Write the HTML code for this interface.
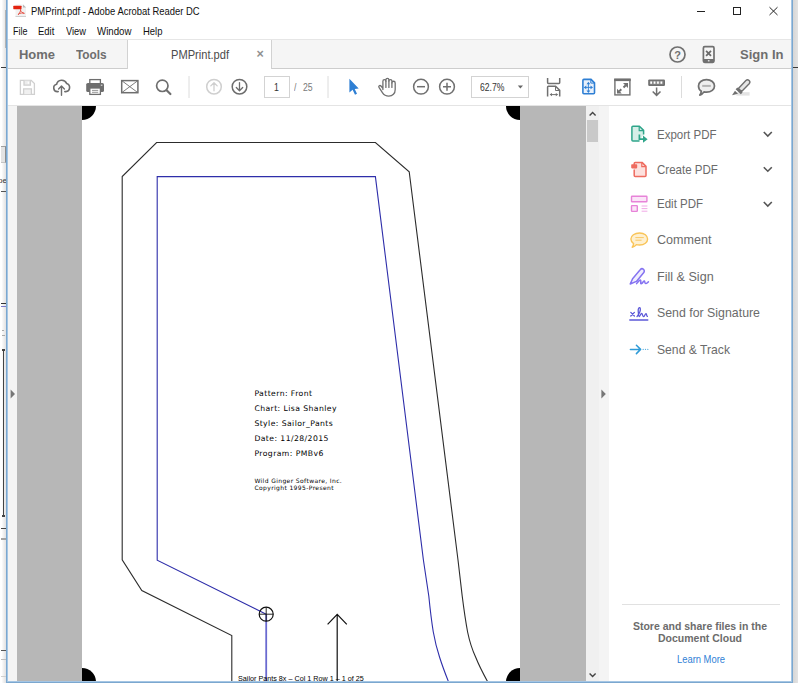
<!DOCTYPE html>
<html>
<head>
<meta charset="utf-8">
<title>PMPrint.pdf - Adobe Acrobat Reader DC</title>
<style>
html,body{margin:0;padding:0;}
body{width:800px;height:683px;overflow:hidden;background:#fff;position:relative;font-family:"Liberation Sans",sans-serif;}
.abs{position:absolute;}
.t{position:absolute;white-space:nowrap;transform-origin:0 0;}
svg{position:absolute;left:0;top:0;overflow:visible;}
</style>
</head>
<body>
<!-- desktop bits outside the window -->
<div class="abs" style="left:0;top:0;width:6px;height:683px;background:linear-gradient(90deg,#fff 0,#fff 25%,#ececec 70%,#e4e2e2 100%)"></div>
<div class="abs" style="left:1px;top:67px;width:6px;height:1px;background:#3a3a3a"></div>
<div class="abs" style="left:5px;top:10px;width:1px;height:38px;background:#b4b4b4"></div>
<div class="abs" style="left:1px;top:146px;width:5px;height:17px;background:#e3e3e3;border-top:1px solid #a0a0a0;border-right:1px solid #8c8c8c;border-bottom:1px solid #c4c4c4;box-sizing:border-box"></div>
<div class="t" style="left:-2px;top:175px;font-size:8px;line-height:11px;color:#333">pe</div>
<div class="abs" style="left:1px;top:191px;width:5px;height:1px;background:#555"></div>
<div class="abs" style="left:1px;top:303px;width:5px;height:1px;background:#333"></div>
<div class="abs" style="left:1px;top:306px;width:5px;height:1px;background:#7a78c8"></div>
<div class="abs" style="left:2px;top:330px;width:2px;height:1px;background:#aaa"></div>
<div class="abs" style="left:2px;top:335px;width:3px;height:1px;background:#aaa"></div>
<div class="abs" style="left:3px;top:350px;width:1px;height:167px;background:#444"></div>
<div class="abs" style="left:2px;top:349px;width:3px;height:2px;background:#444"></div>
<div class="abs" style="left:2px;top:515px;width:3px;height:2px;background:#444"></div>
<div class="abs" style="left:1px;top:528px;width:5px;height:1px;background:#444"></div>
<div class="abs" style="left:1px;top:538px;width:5px;height:2px;background:#a2a2a2"></div>
<div class="abs" style="left:1px;top:650px;width:5px;height:1px;background:#555"></div>
<div class="abs" style="left:1px;top:659px;width:5px;height:1px;background:#bdbdbd"></div>
<div class="abs" style="left:1px;top:676px;width:5px;height:1px;background:#d0d0d0"></div>
<div class="abs" style="left:793px;top:0;width:7px;height:683px;background:linear-gradient(90deg,#d6d6d6 0,#e2e2e2 65%,#fff 72%,#fff 100%)"></div>
<div class="abs" style="left:793px;top:67px;width:5px;height:1px;background:#3a3a3a"></div>

<!-- window frame -->
<div class="abs" style="left:6px;top:0;width:1px;height:683px;background:#7ba7cf"></div>
<div class="abs" style="left:7px;top:0;width:1px;height:683px;background:#a5c6e4"></div>
<div class="abs" style="left:791px;top:0;width:1px;height:683px;background:#a5c6e4"></div>
<div class="abs" style="left:792px;top:0;width:1px;height:683px;background:#7ba7cf"></div>
<div class="abs" style="left:8px;top:681px;width:783px;height:1px;background:#a5c6e4"></div>
<div class="abs" style="left:6px;top:682px;width:787px;height:1px;background:#7ba7cf"></div>

<!-- title bar -->
<div class="t" style="left:30.5px;top:4px;font-size:11.5px;line-height:15px;color:#111;transform:scaleX(0.819)">PMPrint.pdf - Adobe Acrobat Reader DC</div>
<!-- menu bar -->
<div class="t" style="left:13px;top:24px;font-size:11.5px;line-height:15px;color:#111;transform:scaleX(0.78)">File</div>
<div class="t" style="left:38.2px;top:24px;font-size:11.5px;line-height:15px;color:#111;transform:scaleX(0.82)">Edit</div>
<div class="t" style="left:65.5px;top:24px;font-size:11.5px;line-height:15px;color:#111;transform:scaleX(0.81)">View</div>
<div class="t" style="left:96.7px;top:24px;font-size:11.5px;line-height:15px;color:#111;transform:scaleX(0.843)">Window</div>
<div class="t" style="left:142.5px;top:24px;font-size:11.5px;line-height:15px;color:#111;transform:scaleX(0.824)">Help</div>

<!-- tab bar -->
<div class="abs" style="left:8px;top:39px;width:783px;height:1px;background:#e6e6e6"></div>
<div class="abs" style="left:8px;top:40px;width:783px;height:28px;background:#f5f5f5"></div>
<div class="abs" style="left:8px;top:68px;width:783px;height:1px;background:#cdcdcd"></div>
<div class="abs" style="left:127px;top:40px;width:145px;height:29px;background:#fff;border-left:1px solid #d2d2d2;border-right:1px solid #d2d2d2;box-sizing:border-box"></div>
<div class="t" style="left:19px;top:46px;font-size:12px;font-weight:bold;line-height:18px;color:#6e6e6e;transform:scaleX(1.08)">Home</div>
<div class="t" style="left:76px;top:46px;font-size:12px;font-weight:bold;line-height:18px;color:#6e6e6e;transform:scaleX(0.987)">Tools</div>
<div class="t" style="left:170.7px;top:47px;font-size:12px;line-height:16px;color:#4b4b4b;transform:scaleX(0.925)">PMPrint.pdf</div>
<div class="t" style="left:256.6px;top:46px;font-size:12.5px;font-weight:bold;line-height:16px;color:#909090">×</div>
<div class="t" style="left:739.7px;top:46px;font-size:12px;font-weight:bold;line-height:18px;color:#6e6e6e;transform:scaleX(1.087)">Sign In</div>

<!-- toolbar -->
<div class="abs" style="left:8px;top:105px;width:783px;height:1px;background:#e4e4e4"></div>
<div class="abs" style="left:264px;top:76px;width:26px;height:22px;border:1px solid #d3d3d3;box-sizing:border-box;background:#fff"></div>
<div class="t" style="left:273.6px;top:80.7px;font-size:10px;line-height:14px;color:#333;transform:scaleX(0.87)">1</div>
<div class="t" style="left:294px;top:80.7px;font-size:10px;line-height:14px;color:#7a7a7a;word-spacing:4.8px;transform:scaleX(0.87)">/ 25</div>
<div class="abs" style="left:471px;top:76px;width:58px;height:22px;border:1px solid #d3d3d3;box-sizing:border-box;background:#fff"></div>
<div class="t" style="left:479.5px;top:80.7px;font-size:10px;line-height:14px;color:#333;transform:scaleX(0.86)">62.7%</div>

<!-- document area -->
<div class="abs" style="left:8px;top:106px;width:9px;height:575px;background:#f4f4f4"></div>
<div class="abs" style="left:17px;top:106px;width:569px;height:575px;background:#b7b7b7"></div>
<div class="abs" id="page" style="left:82px;top:106px;width:438px;height:575px;background:#fff;overflow:hidden"></div>

<!-- page content -->
<svg width="800" height="683" viewBox="0 0 800 683" style="clip-path:inset(106px 280px 2px 82px)">
  <g fill="#000">
    <circle cx="82" cy="106" r="14"/><circle cx="520" cy="106" r="14"/>
    <circle cx="82" cy="682" r="14"/><circle cx="520" cy="682" r="14"/>
  </g>
  <path d="M231.8 682 V635.6 L141.8 590.6 L122.2 559.9 V176.6 L156.6 142.5 H375.4 L409.2 171.8 L458 560 L462.2 596 Q465 618 467.6 632 Q470.5 646 475.7 657.3 Q480 668 487.8 682" fill="none" stroke="#2c2c2c" stroke-width="1.1"/>
  <path d="M266.2 614.2 L157.2 560.2 V176.6 H375.4 L423.4 560 L428.8 596 Q431 618 433.3 632 Q435.8 646 439.6 657.3 Q443 668 448.6 682" fill="none" stroke="#2e2eaa" stroke-width="1.1"/>
  <path d="M266.2 614.2 V682" fill="none" stroke="#6a6ad0" stroke-width="1.8"/>
  <circle cx="266.2" cy="614.2" r="7" fill="none" stroke="#111" stroke-width="1.2"/>
  <path d="M259.2 614.2 H273.2 M266.2 607.2 V621.2" stroke="#111" stroke-width="0.9" fill="none"/>
  <path d="M337.2 682 V614.4 M327.6 624.4 L337.2 614.4 L346.8 624.4" fill="none" stroke="#111" stroke-width="1.2"/>
  <g font-family="'DejaVu Sans',sans-serif" font-size="7.7" fill="#000" letter-spacing="0.42">
    <text x="254.4" y="395.8">Pattern: Front</text>
    <text x="254.4" y="410.7">Chart: Lisa Shanley</text>
    <text x="254.4" y="425.7">Style: Sailor_Pants</text>
    <text x="254.4" y="440.6">Date: 11/28/2015</text>
    <text x="254.4" y="455.6">Program: PMBv6</text>
  </g>
  <g font-family="'DejaVu Sans',sans-serif" font-size="6" fill="#000" letter-spacing="0.38">
    <text x="254.4" y="482.8">Wild Ginger Software, Inc.</text>
    <text x="254.4" y="489.8">Copyright 1995-Present</text>
  </g>
  <text x="238" y="681.3" font-family="'Liberation Sans',sans-serif" font-size="6.4" fill="#000" textLength="125.7" lengthAdjust="spacingAndGlyphs">Sailor Pants 8x – Col 1 Row 1 – 1 of 25</text>
</svg>
<div class="abs" style="left:586px;top:106px;width:13px;height:575px;background:#f0f0f0"></div>
<div class="abs" style="left:587px;top:120px;width:11px;height:22px;background:#c9c9c9"></div>
<div class="abs" style="left:599px;top:106px;width:10px;height:575px;background:#f4f4f4"></div>

<!-- right panel -->
<div class="t" style="left:657px;top:126.5px;font-size:12.8px;line-height:16px;color:#6b6b6b;transform:scaleX(0.9)">Export PDF</div>
<div class="t" style="left:657px;top:161.5px;font-size:12.8px;line-height:16px;color:#6b6b6b;transform:scaleX(0.9)">Create PDF</div>
<div class="t" style="left:657px;top:196px;font-size:12.8px;line-height:16px;color:#6b6b6b;transform:scaleX(0.9)">Edit PDF</div>
<div class="t" style="left:657px;top:232px;font-size:12.8px;line-height:16px;color:#6b6b6b;transform:scaleX(0.982)">Comment</div>
<div class="t" style="left:657px;top:269px;font-size:12.8px;line-height:16px;color:#6b6b6b;transform:scaleX(0.983)">Fill &amp; Sign</div>
<div class="t" style="left:657px;top:305px;font-size:12.8px;line-height:16px;color:#6b6b6b;transform:scaleX(0.965)">Send for Signature</div>
<div class="t" style="left:657px;top:342px;font-size:12.8px;line-height:16px;color:#6b6b6b;transform:scaleX(0.95)">Send &amp; Track</div>

<div class="abs" style="left:622px;top:604px;width:158px;height:1px;background:#e1e1e1"></div>
<div class="abs" style="left:609px;top:620.5px;width:182px;text-align:center;font-size:10px;font-weight:bold;line-height:12px;color:#6c6c6c;transform:scaleX(1.05)">Store and share files in the<br>Document Cloud</div>
<div class="abs" style="left:609.5px;top:653px;width:182px;text-align:center;font-size:10px;line-height:13px;color:#2f7fd6;transform:scaleX(0.94)">Learn More</div>


<!-- chrome icons -->
<svg width="800" height="683" viewBox="0 0 800 683">
  <!-- app icon -->
  <g>
    <path d="M15.5 4.6 H23 L26 7.6 V16.4 H15.5 Z" fill="#f1f1f1"/>
    <path d="M15.5 16.5 H26" stroke="#c9c9c9" stroke-width="0.9"/>
    <path d="M23 4.4 L26.2 7.6 H23 Z" fill="#b9b9b9"/>
    <rect x="13.3" y="5.8" width="8.2" height="3.4" rx="0.4" fill="#e3220f"/>
    <path d="M20.7 9.2 C20.9 11 19.7 13.1 18.3 14.7 M18.6 13.9 C20.4 13 22.4 12.7 24 13.2 M20.5 10.4 C21.1 11.9 22.6 13.1 24 13.3" fill="none" stroke="#e4483b" stroke-width="0.9" stroke-linecap="round"/>
  </g>
  <!-- window controls -->
  <path d="M697 11.5 H705" stroke="#222" stroke-width="1"/>
  <rect x="733.5" y="7.5" width="7" height="7" fill="none" stroke="#222" stroke-width="1"/>
  <path d="M769.5 7.2 L777.5 15 M777.5 7.2 L769.5 15" stroke="#222" stroke-width="1"/>

  <!-- tab bar: help + phone -->
  <circle cx="677.5" cy="54.5" r="7.5" fill="none" stroke="#707070" stroke-width="1.7"/>
  <text x="677.5" y="58.6" text-anchor="middle" font-family="'Liberation Sans',sans-serif" font-size="11" font-weight="bold" fill="#707070">?</text>
  <rect x="703.4" y="46.7" width="10.6" height="15.6" rx="1.3" fill="none" stroke="#707070" stroke-width="1.7"/>
  <rect x="703.4" y="59" width="10.6" height="3.4" fill="#707070"/>
  <rect x="707.9" y="60.2" width="1.6" height="1.2" fill="#f5f5f5"/>
  <path d="M706.1 50.9 L711 55.8 M711 50.9 L706.1 55.8" stroke="#6a6a6a" stroke-width="1.8"/>

  <!-- save (disabled) -->
  <g fill="none" stroke="#d0d0d0" stroke-width="1.3">
    <path d="M20.4 80.4 H31.2 L34.4 83.6 V94.4 H20.4 Z"/>
    <path d="M24 80.6 V85.2 H30.4 V80.6" fill="#ececec"/>
    <path d="M23.6 94.2 V88.8 H31.4 V94.2" fill="#f0f0f0"/>
    <path d="M28.3 81.8 V83.8" stroke-width="1.2" stroke="#fff"/>
  </g>
  <!-- cloud upload -->
  <g fill="none" stroke="#6e6e6e" stroke-width="1.6" stroke-linecap="round" stroke-linejoin="round">
    <path d="M58.2 91.6 H57.4 A3.7 3.7 0 0 1 56.6 84.3 A5.3 5.3 0 0 1 66.6 83.4 A4.2 4.2 0 0 1 65.8 91.6 H64.8"/>
    <path d="M61.5 95.2 V86.2 M58.6 88.9 L61.5 86 L64.4 88.9" stroke-width="1.4"/>
  </g>
  <!-- printer -->
  <g>
    <rect x="89.8" y="79.6" width="10.6" height="4.6" fill="#fff" stroke="#6e6e6e" stroke-width="1.3"/>
    <rect x="86.2" y="83" width="17.8" height="9" rx="1.6" fill="#6e6e6e"/>
    <rect x="89.8" y="88" width="10.6" height="6.4" fill="#fff" stroke="#6e6e6e" stroke-width="1.3"/>
    <path d="M92 90.4 H98.2 M92 92.3 H98.2" stroke="#8a8a8a" stroke-width="0.9"/>
    <rect x="100.8" y="84.6" width="1.6" height="1.3" fill="#cfcfcf"/>
  </g>
  <!-- envelope -->
  <g fill="none" stroke="#6e6e6e">
    <rect x="121.7" y="80.6" width="16.2" height="12.1" stroke-width="1.5"/>
    <path d="M121.7 80.6 L137.9 92.7 M137.9 80.6 L121.7 92.7" stroke-width="0.9"/>
  </g>
  <!-- magnifier -->
  <g fill="none" stroke="#6e6e6e" stroke-linecap="round">
    <circle cx="162.3" cy="85.8" r="5.7" stroke-width="1.7"/>
    <path d="M166.6 90.2 L170.4 94" stroke-width="2.2"/>
  </g>
  <path d="M189 76 V98 M328 76 V98 M681.5 76 V98" stroke="#dcdcdc" stroke-width="1"/>
  <!-- up (disabled) -->
  <g fill="none" stroke="#cfcfcf" stroke-width="1.5" stroke-linecap="round" stroke-linejoin="round">
    <circle cx="214" cy="86.7" r="7.3"/>
    <path d="M214 90.8 V82.8 M210.8 85.9 L214 82.7 L217.2 85.9" stroke-width="1.3"/>
  </g>
  <!-- down -->
  <g fill="none" stroke="#6c6c6c" stroke-width="1.5" stroke-linecap="round" stroke-linejoin="round">
    <circle cx="239.5" cy="86.7" r="7.3"/>
    <path d="M239.5 82.6 V90.6 M236.3 87.5 L239.5 90.7 L242.7 87.5" stroke-width="1.3"/>
  </g>
  <!-- select arrow -->
  <path d="M349.4 78.8 V92.6 L352.6 89.8 L355 94.7 L357 93.7 L354.7 89 L358.7 88.6 Z" fill="#2e7fd4"/>
  <!-- hand -->
  <g fill="none" stroke="#707070" stroke-width="1.3" stroke-linecap="round" stroke-linejoin="round">
    <path d="M382.9 89.6 V81.2 a1.5 1.5 0 0 1 3 0 V79.9 a1.5 1.5 0 0 1 3 0 V81.1 a1.5 1.5 0 0 1 3 0 V82.9 a1.65 1.65 0 0 1 3.3 0 V89.4 C395.2 93.6 392.6 96.1 388.8 96.1 C385.6 96.1 383.8 94.8 382.4 92.6 L379 87.4 C378.2 86 379.8 84.8 381 86 L382.9 88.4"/>
    <path d="M385.9 81.2 V87.4 M388.9 81 V87.4 M391.9 82.8 V87.4"/>
  </g>
  <!-- zoom out / in -->
  <g fill="none" stroke="#707070" stroke-width="1.5">
    <circle cx="421" cy="86.7" r="7.4"/>
    <path d="M417 86.7 H425"/>
    <circle cx="447" cy="86.7" r="7.4"/>
    <path d="M443 86.7 H451 M447 82.7 V90.7"/>
  </g>
  <path d="M517.8 85.6 H523 L520.4 88.6 Z" fill="#666"/>
  <!-- fit width -->
  <g fill="none" stroke="#707070" stroke-width="1.5">
    <path d="M547.6 78 V82.6 a0.8 0.8 0 0 0 0.8 0.8 H558.9 a0.8 0.8 0 0 0 0.8 -0.8 V78"/>
    <path d="M547.6 96.4 V87 a0.8 0.8 0 0 1 0.8 -0.8 H555.6 L559.7 90.4 V96.4"/>
    <path d="M555.5 86.6 V90.5 H559.4" stroke-width="1"/>
    <path d="M551 94.6 H557" stroke-width="1"/>
    <path d="M549.6 94.6 L552 92.9 V96.3 Z M558.2 94.6 L555.8 92.9 V96.3 Z" fill="#707070" stroke="none"/>
  </g>
  <!-- fit page (active) -->
  <g>
    <path d="M582.9 80.4 A1 1 0 0 1 583.9 79.4 H591 L594.5 82.9 V92.8 A1 1 0 0 1 593.5 93.8 H583.9 A1 1 0 0 1 582.9 92.8 Z" fill="#e9f1fb" stroke="#2e7fd4" stroke-width="1.6"/>
    <path d="M590.8 79.8 V83.1 H594.3" fill="none" stroke="#2e7fd4" stroke-width="1"/>
    <path d="M588.4 83.4 V91.4 M584.6 87.4 H592.2" stroke="#2e7fd4" stroke-width="0.9"/>
    <path d="M586.5 84.3 L588.4 81.7 L590.3 84.3 Z M586.5 90.5 L588.4 93.1 L590.3 90.5 Z M586.3 85.6 L583.8 87.4 L586.3 89.2 Z M590.5 85.6 L593 87.4 L590.5 89.2 Z" fill="#2e7fd4"/>
  </g>
  <!-- full screen -->
  <g>
    <rect x="614.9" y="79.4" width="15" height="15.5" fill="none" stroke="#707070" stroke-width="1.4"/>
    <rect x="614.2" y="78.6" width="16.5" height="2.5" fill="#707070"/>
    <path d="M625.8 85.2 L623.5 87.5 M619.2 91.4 L621.3 89.3" stroke="#707070" stroke-width="2"/>
    <path d="M623 83 H628 V88 Z M617 88.8 V93.6 H621.8 Z" fill="#707070"/>
  </g>
  <!-- scroll mode -->
  <g>
    <rect x="648.2" y="79.4" width="16.8" height="6.6" rx="1.2" fill="#707070"/>
    <rect x="649.8" y="81" width="13.6" height="3.4" fill="#8d8d8d"/>
    <path d="M650.3 82.7 H663.2" stroke="#fff" stroke-width="2.3" stroke-dasharray="1.7 1.7"/>
    <path d="M656.6 87.4 V95 M652.7 91.5 L656.6 95.4 L660.5 91.5" fill="none" stroke="#707070" stroke-width="1.5"/>
  </g>
  <!-- comment -->
  <g>
    <path d="M706.5 79.7 C711.3 79.7 714.5 82.4 714.5 85.9 C714.5 89.4 711.3 92.1 706.5 92.1 C705.6 92.1 704.8 92 704 91.85 C703 93.4 701.6 94.6 699.8 95.1 C700.7 94 701.2 92.6 701.3 91.2 C699.5 90 698.5 88.1 698.5 85.9 C698.5 82.4 701.7 79.7 706.5 79.7 Z" fill="#efefef" stroke="#707070" stroke-width="1.7" stroke-linejoin="round"/>
    <path d="M702.2 85.9 H710.8" stroke="#b4b4b4" stroke-width="2"/>
  </g>
  <!-- highlighter -->
  <g>
    <rect x="736.4" y="92.2" width="13.2" height="3.4" fill="#e3e3e3"/>
    <path d="M738.4 88.4 L745.9 80.5 A2.3 2.3 0 0 1 749.2 83.7 L741.6 91.6 Z" fill="#e6e6e6" stroke="#707070" stroke-width="1.4" stroke-linejoin="round"/>
    <path d="M737.4 87.4 L742.6 92.4 L740.8 94.2 L735.6 89.2 Z" fill="#707070"/>
    <path d="M735 90.8 L738 93.7 L732 95.2 Z" fill="#707070"/>
  </g>

  <!-- scrollbar arrows, panel toggles -->
  <path d="M589.6 115.6 L592.6 112.6 L595.6 115.6" fill="none" stroke="#444" stroke-width="1.4"/>
  <path d="M589.6 673.6 L592.6 676.6 L595.6 673.6" fill="none" stroke="#444" stroke-width="1.4"/>
  <path d="M10.6 389.6 L15 394 L10.6 398.4 Z" fill="#777"/>
  <path d="M601.4 389.6 L605.8 394 L601.4 398.4 Z" fill="#777"/>

  <!-- right panel icons -->
  <!-- export -->
  <g>
    <path d="M639.5 141 H632.9 A1 1 0 0 1 631.9 140 V127.2 A1 1 0 0 1 632.9 126.2 H639.4 L643.6 130.4 V134.4" fill="#d6efe8" stroke="#2fa58a" stroke-width="1.5" stroke-linejoin="round"/>
    <path d="M639.2 126.4 V130.6 H643.4" fill="none" stroke="#2fa58a" stroke-width="1.2"/>
    <path d="M639.4 134.6 V139.2 H644" fill="none" stroke="#2fa58a" stroke-width="1.7"/>
    <path d="M643 135.6 L647.6 139.2 L643 142.8 Z" fill="#2fa58a"/>
  </g>
  <!-- create -->
  <g>
    <path d="M634.2 166 V163.4 A1 1 0 0 1 635.2 162.4 H642 L646 166.4 V175.4 A1 1 0 0 1 645 176.4 H635.2 A1 1 0 0 1 634.2 175.4 V169.6" fill="#fde1de" stroke="#ee6b5f" stroke-width="1.5" stroke-linejoin="round"/>
    <path d="M641.8 162.6 V166.6 H645.8" fill="none" stroke="#ee6b5f" stroke-width="1.2"/>
    <rect x="631.2" y="164.2" width="6" height="4.2" rx="0.8" fill="#ee6b5f"/>
  </g>
  <!-- edit -->
  <g fill="#fbe5f8" stroke="#e783d8" stroke-width="1.4">
    <rect x="631.5" y="196.2" width="15.4" height="5.6" rx="0.6"/>
    <rect x="631.5" y="205.6" width="5.8" height="5.8" rx="0.6"/>
    <path d="M641.6 206 H647.4 M641.6 208.6 H647.4 M641.6 211.2 H647.4" stroke-width="0.9" stroke="#ef9fe3" fill="none"/>
  </g>
  <!-- comment -->
  <path d="M639.6 233 C644.4 233 647.6 235.6 647.6 239 C647.6 242.4 644.4 245 639.6 245 C638.4 245 637.4 244.9 636.4 244.6 C635.4 245.9 634 246.8 632.2 247.2 C633.2 246 633.6 244.8 633.6 243.6 C631.9 242.5 630.9 240.9 630.9 239 C630.9 235.6 634.6 233 639.6 233 Z" fill="#fef0d0" stroke="#f9c458" stroke-width="1.4" stroke-linejoin="round"/>
  <path d="M635.4 237.6 H643.8 M635.4 240.2 H641.6" stroke="#f9c458" stroke-width="0.9"/>
  <!-- fill & sign -->
  <g fill="none" stroke="#8573f1" stroke-width="1.5" stroke-linejoin="round" stroke-linecap="round">
    <path d="M630.2 284 L632.8 278.4 L640.4 269.6 A2.2 2.2 0 0 1 643.8 272.4 L636.4 281.4 L630.2 284 Z" fill="#f0eefe"/>
    <path d="M636.6 283.6 C638.4 281 640.6 279 640.8 280.8 C641 282.4 640 284.2 641.6 283.6 C643 283 643.4 280.6 644.4 281 C645 281.6 644.6 283.8 645.8 283.6 C646.8 283.4 647.4 282.6 648.4 281.8"/>
  </g>
  <!-- send for signature -->
  <g fill="none" stroke="#5c58d8" stroke-linecap="round" stroke-linejoin="round">
    <path d="M629.8 320 H647.8" stroke-width="1.4"/>
    <path d="M630.8 312.4 L634.4 316 M634.4 312.4 L630.8 316" stroke-width="1.3"/>
    <path d="M637 316.6 C639.4 313.6 640.8 310.4 640.2 308.2 C639.6 306.6 638 308 638.2 311 C638.4 314 638.6 316.6 639.2 316.6 C640 316.6 640.4 313.6 641.6 313.4 C642.8 313.4 642.2 316.8 643.6 316.6 C644.8 316.4 645 313.6 646 313.6 C646.8 313.8 646.4 316.2 647.4 316.4" stroke-width="1.3"/>
  </g>
  <!-- send & track -->
  <g fill="none" stroke="#2f9bd7" stroke-width="1.5" stroke-linecap="round" stroke-linejoin="round">
    <path d="M630.4 349.4 H640 M636.4 345.2 L640.6 349.4 L636.4 353.6"/>
    <path d="M643.2 349.4 h0.01 M645.5 349.4 h0.01 M647.8 349.4 h0.01" stroke-width="1.3" stroke="#5fb1e0"/>
  </g>
  <!-- chevrons -->
  <g fill="none" stroke="#555" stroke-width="1.6">
    <path d="M763.8 132 L767.8 136 L771.8 132"/>
    <path d="M763.8 167.2 L767.8 171.2 L771.8 167.2"/>
    <path d="M763.8 202 L767.8 206 L771.8 202"/>
  </g>
</svg>
</body>
</html>
